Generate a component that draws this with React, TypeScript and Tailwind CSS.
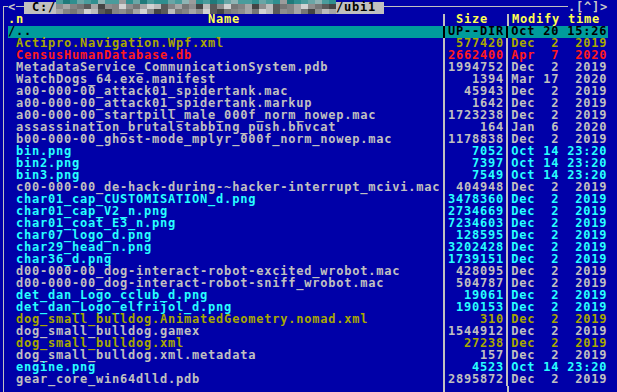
import React from "react";

type F = { n: string; s: string; t: string; c: string };

const GR = "text-[#c0c0c0]";
const OL = "text-[#a8a800]";
const RD = "text-[#ff1c1c]";
const CY = "text-[#28ffff]";

const D19 = "Dec  2  2019";
const O14 = "Oct 14 23:20";

const files: F[] = [
  { n: "Actipro.Navigation.Wpf.xml", s: "577420", t: D19, c: OL },
  { n: "CensusHumanDatabase.db", s: "2662400", t: "Apr  7  2020", c: RD },
  { n: "MetadataService_CommunicationSystem.pdb", s: "1994752", t: D19, c: GR },
  { n: "WatchDogs_64.exe.manifest", s: "1394", t: "Mar 17  2020", c: GR },
  { n: "a00-000-00_attack01_spidertank.mac", s: "45943", t: D19, c: GR },
  { n: "a00-000-00_attack01_spidertank.markup", s: "1642", t: D19, c: GR },
  { n: "a00-000-00_startpill_male_000f_norm_nowep.mac", s: "1723238", t: D19, c: GR },
  { n: "assassination_brutalstabbing_push.bhvcat", s: "164", t: "Jan  6  2020", c: GR },
  { n: "b00-000-00_ghost-mode_mplyr_000f_norm_nowep.mac", s: "1178838", t: D19, c: GR },
  { n: "bin.png", s: "7052", t: O14, c: CY },
  { n: "bin2.png", s: "7397", t: O14, c: CY },
  { n: "bin3.png", s: "7549", t: O14, c: CY },
  { n: "c00-000-00_de-hack-during-~hacker-interrupt_mcivi.mac", s: "404948", t: D19, c: GR },
  { n: "char01_cap_CUSTOMISATION_d.png", s: "3478360", t: D19, c: CY },
  { n: "char01_cap_V2_n.png", s: "2734669", t: D19, c: CY },
  { n: "char01_coat_E3_n.png", s: "7234603", t: D19, c: CY },
  { n: "char07_logo_d.png", s: "128595", t: D19, c: CY },
  { n: "char29_head_n.png", s: "3202428", t: D19, c: CY },
  { n: "char36_d.png", s: "1739151", t: D19, c: CY },
  { n: "d00-000-00_dog-interact-robot-excited_wrobot.mac", s: "428095", t: D19, c: GR },
  { n: "d00-000-00_dog-interact-robot-sniff_wrobot.mac", s: "504787", t: D19, c: GR },
  { n: "det_dan_Logo_cclub_d.png", s: "19061", t: D19, c: CY },
  { n: "det_dan_Logo_elfrijol_d.png", s: "190153", t: D19, c: CY },
  { n: "dog_small_bulldog.AnimatedGeometry.nomad.xml", s: "310", t: D19, c: OL },
  { n: "dog_small_bulldog.gamex", s: "1544912", t: D19, c: GR },
  { n: "dog_small_bulldog.xml", s: "27238", t: D19, c: OL },
  { n: "dog_small_bulldog.xml.metadata", s: "157", t: D19, c: GR },
  { n: "engine.png", s: "4523", t: O14, c: CY },
  { n: "gear_core_win64dlld.pdb", s: "2895872", t: D19, c: GR },
];

const GRAYS = [
  "bg-[#5a5a5a]",
  "bg-[#767676]",
  "bg-[#8e8e8e]",
  "bg-[#a6a6a6]",
  "bg-[#bcbcbc]",
  "bg-[#d2d2d2]",
  "bg-[#444444]",
  "bg-[#848484]",
];
const TEALS = [
  "bg-[#2f8f8f]",
  "bg-[#4a9c9c]",
  "bg-[#6aa6a6]",
  "bg-[#8fb4b4]",
  "bg-[#1f7a7a]",
  "bg-[#9c9c9c]",
];

const topSeq = "1402103115024100213501402311021054012310";
const midSeq = "2371036275213540731264025173624017352106";
const botSeq = "3712540672135260417325061723154027316243";

function Band({ seq, pal, h }: { seq: string; pal: string[]; h: string }) {
  return (
    <div className={`flex ${h}`}>
      {seq.split("").map((d, i) => (
        <div key={i} className={`w-[7px] h-full ${pal[Number(d) % pal.length]}`} />
      ))}
    </div>
  );
}

function Sep({ line }: { line: string }) {
  return (
    <div className="w-[8px] h-full flex justify-center shrink-0">
      <div className={`w-[2px] h-full ${line}`} />
    </div>
  );
}

function Row({ f, selected }: { f: F; selected?: boolean }) {
  const fg = selected ? "text-black" : f.c;
  const line = selected ? "bg-black" : "bg-[#c0c0c0]";
  return (
    <div className={`flex h-[12px] shrink-0 ${selected ? "bg-[#009c9c]" : ""} ${fg}`}>
      <div className="w-[432px] shrink-0 whitespace-pre">{f.n}</div>
      <Sep line={line} />
      <div className="w-[56px] shrink-0 text-right whitespace-pre mr-[-0.78px]">{f.s}</div>
      <Sep line={line} />
      <div className="w-[96px] shrink-0 whitespace-pre">{f.t}</div>
    </div>
  );
}

export default function App() {
  return (
    <div className="w-[617px] h-[392px] overflow-hidden bg-[#0000a8] flex flex-col font-['DejaVu_Sans_Mono',monospace] font-bold text-[12px] leading-[11px] tracking-[0.78px]">
      {/* title row */}
      <div className="flex h-[14px] shrink-0 text-[#c8c8c8]">
        <div className="w-[8px] shrink-0">
          <div className="mt-[6px] ml-[3px] w-[5px] h-[8px] border-l border-t border-[#c0c0c0]" />
        </div>
        <div className="w-[8px] shrink-0 pt-[2px]">&lt;</div>
        <div className="w-[8px] shrink-0 pt-[6px]">
          <div className="h-[1px] bg-[#c0c0c0]" />
        </div>
        <div className="w-[32px] shrink-0 mt-[2px] h-[12px] bg-[#c0c0c0] text-black whitespace-pre">
          {" C:/"}
        </div>
        <div className="w-[280px] shrink-0 flex flex-col">
          <Band seq={topSeq} pal={TEALS} h="h-[4px]" />
          <Band seq={midSeq} pal={GRAYS} h="h-[5px]" />
          <Band seq={botSeq} pal={GRAYS} h="h-[5px]" />
        </div>
        <div className="w-[48px] shrink-0 mt-[2px] h-[12px] bg-[#c0c0c0] text-black whitespace-pre">
          {"/ubi1 "}
        </div>
        <div className="w-[184px] shrink-0 pt-[6px]">
          <div className="h-[1px] bg-[#c0c0c0]" />
        </div>
        <div className="w-[40px] shrink-0 pt-[2px] whitespace-pre">.[^]&gt;</div>
      </div>

      {/* body */}
      <div className="flex flex-1 min-h-0">
        <div className="w-[8px] shrink-0">
          <div className="ml-[3px] w-[1px] h-full bg-[#c0c0c0]" />
        </div>
        <div className="w-[600px] shrink-0 flex flex-col">
          <div className="flex h-[12px] shrink-0 text-[#ffff50]">
            <div className="w-[432px] shrink-0 flex whitespace-pre">
              <div className="w-[200px] shrink-0">.n</div>
              <div>Name</div>
            </div>
            <Sep line="bg-[#c0c0c0]" />
            <div className="w-[56px] shrink-0 pl-[8px]">Size</div>
            <Sep line="bg-[#c0c0c0]" />
            <div className="w-[96px] shrink-0 whitespace-pre">Modify time</div>
          </div>
          <Row f={{ n: "/..", s: "UP--DIR", t: "Oct 20 15:26", c: GR }} selected />
          {files.map((f) => (
            <Row key={f.n} f={{ ...f, n: " " + f.n }} />
          ))}
          <div className="flex flex-1">
            <div className="w-[432px] shrink-0" />
            <Sep line="bg-[#c0c0c0]" />
            <div className="w-[56px] shrink-0" />
            <Sep line="bg-[#c0c0c0]" />
          </div>
        </div>
      </div>
    </div>
  );
}
